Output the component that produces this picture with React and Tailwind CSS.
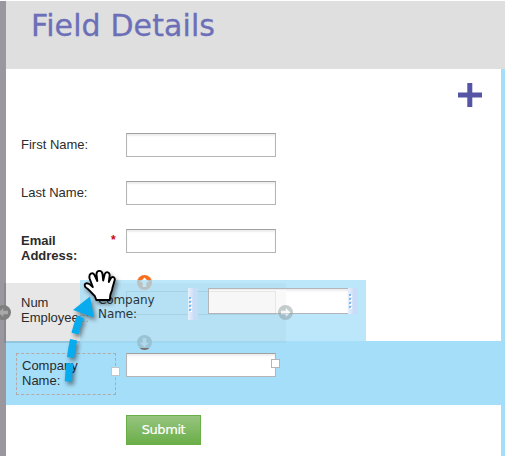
import React from "react";

function Label({ children, bold }) {
  return (
    <div
      className={
        "w-[90px] pt-[4px] text-[13px] leading-[15px] text-[#2b2b2b] " +
        (bold ? "font-bold" : "")
      }
    >
      {children}
    </div>
  );
}

function TextField() {
  return (
    <div className="h-[24px] w-[150px] shrink-0 border border-[#b5b5b5] border-t-[#a0a0a0] bg-white shadow-[inset_0_2px_2px_#eeeeee]" />
  );
}

function FormRow({ label, bold, required }) {
  return (
    <div className="flex h-[48px] pl-[15px]">
      <Label bold={bold}>{label}</Label>
      <div className="w-[15px] pt-[4px] text-[12px] leading-[15px] font-bold text-[#d0021b]">
        {required ? "*" : ""}
      </div>
      <TextField />
    </div>
  );
}

function ArrowDot({ color, angle, className, arrow = "#fff" }) {
  return (
    <svg className={className} width="15" height="15" viewBox="0 0 15 15">
      <circle cx="7.5" cy="7.5" r="7.5" fill={color} />
      <path
        d="M7.5 2.5 L12 7.3 H9.3 V12 H5.7 V7.3 H3 Z"
        fill={arrow}
        transform={`rotate(${angle} 7.5 7.5)`}
      />
    </svg>
  );
}

function Grip({ className }) {
  return (
    <div
      className={
        "flex flex-col gap-[2px] bg-linear-to-r from-[#e4eefb] from-10% to-[#c8dcf8] to-60% pl-px " +
        className
      }
    >
      {[0, 1, 2, 3].map((n) => (
        <div key={n} className="h-[2px] w-[2px] bg-[#80b8f2] shadow-[1px_1px_0_#fff]" />
      ))}
    </div>
  );
}

export default function App() {
  return (
    <div className="relative flex h-[456px] w-[506px] overflow-hidden bg-white pt-px pr-px font-['Liberation_Sans',Arial,sans-serif]">
      <div className="w-[6px] shrink-0 bg-[#9a989e]" />
      <div className="flex flex-1 flex-col">
        <header className="h-[68px] bg-[#dfdfdf] pl-[25px] pt-[7px]">
          <h1 className="whitespace-nowrap font-['DejaVu_Sans',Verdana,sans-serif] text-[30px] leading-[36px] tracking-[0.1px] text-[#6c6fb8] [-webkit-text-stroke:0.3px_#6c6fb8]">
            Field Details
          </h1>
        </header>
        <main className="flex flex-1 flex-col border-r-4 border-[#a5def8]">
          <div className="flex h-[64px] justify-end pr-[19px] pt-[14px]">
            <svg width="24" height="24" viewBox="0 0 24 24">
              <path d="M9.3 0h5v9.4H24v5H14.3V24h-5v-9.6H0v-5h9.3z" fill="#5654a5" />
            </svg>
          </div>
          <FormRow label="First Name:" />
          <FormRow label="Last Name:" />
          <FormRow label={<>Email<br />Address:</>} bold required />
          <div className="mt-[6px] h-[58px]">
            <div className="-ml-[2px] flex h-[60px] w-[282px] bg-[#e7e7e7] pl-[17px] pt-[8px]">
              <div className="w-[105px] pt-[4px] text-[13px] leading-[15px] text-[#2b2b2b]">
                Num
                <br />
                Employees:
              </div>
              <div className="h-[24px] w-[150px] border border-[#aaaaaa] bg-[#e7e7e7]" />
            </div>
          </div>
          <div className="relative -mr-1 flex h-[64px] bg-[#a5def8] pl-[10px] pt-[12px]">
            <div className="relative h-[42px] w-[100px] border border-dashed border-[#b4a8a8] pl-[5px] pt-[4px] text-[13px] leading-[15px] text-[#2b2b2b]">
              Company
              <br />
              Name:
              <div className="absolute -right-[5px] top-[13px] h-[9px] w-[9px] border border-[#c5c5c5] bg-white" />
            </div>
            <div className="relative ml-[10px] h-[24px]">
              <TextField />
              <div className="absolute -right-[4px] top-[6px] h-[9px] w-[9px] border border-[#b5b5b5] bg-white" />
            </div>
          </div>
          <div className="pl-[120px] pt-[10px]">
            <button className="h-[30px] w-[75px] border border-[#69af46] bg-linear-to-b from-[#96c47e] to-[#6bae48] font-['DejaVu_Sans',Verdana,sans-serif] text-[13px] leading-[28px] tracking-[-0.45px] text-white [-webkit-text-stroke:0.2px_white]">
              Submit
            </button>
          </div>
        </main>
      </div>

      <div className="absolute left-0 top-[283px] h-[60px] w-[6px] border-l-4 border-[#9a989e] bg-[#8b898f]" />
      <div className="absolute left-[6px] top-[341px] h-[2px] w-[280px] bg-[#93c6dc]" />
      <div className="absolute left-0 top-[305px] h-[15px] w-[11px] overflow-hidden">
        <ArrowDot className="-ml-[4px]" color="#7f7f7f" arrow="#a9a9ab" angle={-90} />
      </div>
      <ArrowDot className="absolute left-[137px] top-[275px]" color="#fa6e1e" angle={0} />
      <ArrowDot className="absolute left-[137px] top-[335px]" color="#7a6f6c" arrow="#c7c7c7" angle={180} />

      <div className="absolute left-[80px] top-[280px] h-[68px] w-[286px] bg-[#a5def8]/75">
        <div className="flex pt-[8px]">
          <div className="ml-[18px] w-[90px] pt-[5px] font-['DejaVu_Sans',Verdana,sans-serif] text-[12px] leading-[14px] tracking-[-0.1px] text-[#2b363c]">
            Company
            <br />
            Name:
          </div>
          <Grip className="h-[32px] w-[10px] pt-[9px]" />
          <div className="ml-[10px] h-[26px] w-[140px] border border-r-0 border-[#b3b5b6] bg-white shadow-[inset_0_2px_2px_#ececf0]" />
          <Grip className="h-[26px] w-[10px] pt-[6px]" />
        </div>
      </div>
      <div className="absolute left-[209px] top-[290px] h-[23px] w-[77px] bg-[#f9f9f9]" />
      <div className="absolute left-[209px] top-[291px] h-[22px] w-[67px] border-r border-t border-[#e7e7e4] bg-[#f7f7f7]" />
      <div className="absolute left-[286px] top-[341px] h-[7px] w-[80px] bg-[#a5def8]" />
      <ArrowDot className="absolute left-[278px] top-[305px] opacity-50" color="#8f9c9f" arrow="#f2f6f8" angle={90} />

      <svg
        className="absolute left-[55px] top-[260px] drop-shadow-[2px_3px_2px_rgba(0,0,0,0.45)]"
        width="65"
        height="130"
        viewBox="0 0 65 130"
      >
        <path
          d="M13.3 121.5 Q16 77 27 53"
          fill="none"
          stroke="#08abed"
          strokeWidth="7.2"
          strokeDasharray="18 6"
        />
        <path d="M35 36.5 L18 50 L39 57.5 Z" fill="#08abed" />
        <path
          d="M41.3 40 L39.8 36 C36 33 34 29 30.8 27.5 C28 24.5 31 21.5 35 24.5 L37.8 27 L34.6 18.5 C33.5 13.5 37.5 11.8 39.5 15 L42.3 21 L41.5 14 C41.8 9.8 46.8 9.8 47.5 14 L48.2 20.5 L49.6 14.5 C51 10.6 55.2 12 54.6 16 L53.8 22 L55.4 19 C57.5 15.2 60.8 17.5 59.4 21 L57.4 28 C57.4 31 55.5 32 55.2 36 L54.8 40 Z"
          fill="#fff"
          stroke="#000"
          strokeWidth="1.9"
          strokeLinejoin="round"
        />
      </svg>
    </div>
  );
}
